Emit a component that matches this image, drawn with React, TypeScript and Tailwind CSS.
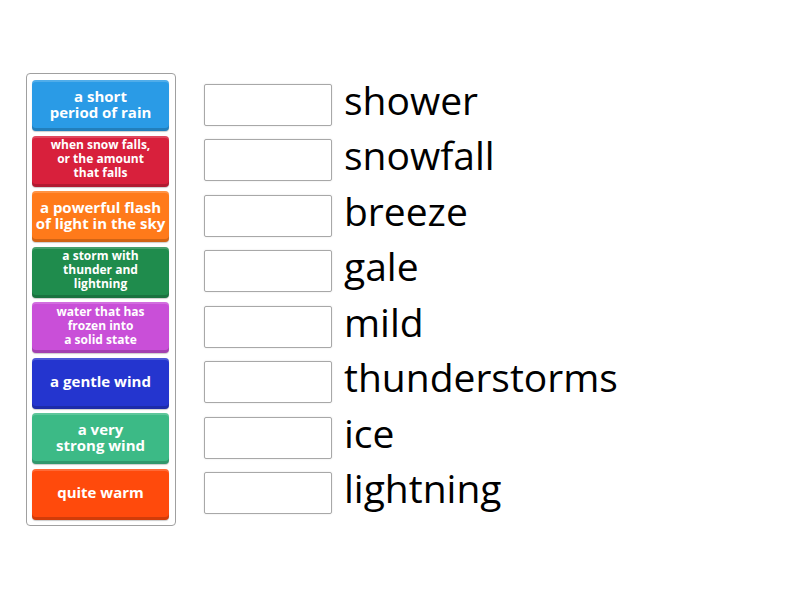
const tiles: { lines: string[]; bg: string; size: string }[] = [
  { lines: ["a short", "period of rain"], bg: "bg-[#2a9be6]", size: "text-[15px] leading-[16px]" },
  { lines: ["when snow falls,", "or the amount", "that falls"], bg: "bg-[#d8203c]", size: "text-[12px] leading-[14px]" },
  { lines: ["a powerful flash", "of light in the sky"], bg: "bg-[#ff7a1a]", size: "text-[15px] leading-[16px]" },
  { lines: ["a storm with", "thunder and", "lightning"], bg: "bg-[#1f8c4d]", size: "text-[12px] leading-[14px]" },
  { lines: ["water that has", "frozen into", "a solid state"], bg: "bg-[#c94fd8]", size: "text-[12px] leading-[14px]" },
  { lines: ["a gentle wind"], bg: "bg-[#2435cf]", size: "text-[15px] leading-[16px]" },
  { lines: ["a very", "strong wind"], bg: "bg-[#3cba86]", size: "text-[15px] leading-[16px]" },
  { lines: ["quite warm"], bg: "bg-[#ff4a0c]", size: "text-[15px] leading-[16px]" },
];

const words = ["shower", "snowfall", "breeze", "gale", "mild", "thunderstorms", "ice", "lightning"];

export default function App() {
  return (
    <div className="w-[800px] h-[600px] bg-white font-['Open_Sans',sans-serif]">
      <div className="flex gap-[28px] pl-[26px] pt-[73px]">
        {/* answer tiles */}
        <div className="w-[150px] h-[453px] border border-[#a0a0a0] rounded-[4px] px-[5px] pt-[6px] flex flex-col gap-[4.57px]">
          {tiles.map((t) => (
            <div
              key={t.lines[0]}
              className={`h-[51px] w-[137px] rounded-[4px] ${t.bg} flex flex-col items-center justify-center pb-[4px] text-white font-bold text-center whitespace-nowrap shadow-[inset_0_-3px_0_rgba(0,0,0,0.18),inset_0_2px_0_rgba(255,255,255,0.18),0_1px_1px_rgba(0,0,0,0.2)] ${t.size}`}
            >
              {t.lines.map((l) => (
                <span key={l}>{l}</span>
              ))}
            </div>
          ))}
        </div>

        {/* targets */}
        <div className="pt-[6px] flex flex-col gap-[4.57px]">
          {words.map((w) => (
            <div key={w} className="h-[51px] flex items-center">
              <div className="w-[128px] h-[42px] border border-[#a8a8a8] rounded-[2px] bg-white shadow-[0_0_2px_rgba(0,0,0,0.12)]" />
              <span className="ml-[12px] mb-[11px] text-[39px] text-black leading-none">{w}</span>
            </div>
          ))}
        </div>
      </div>
    </div>
  );
}
